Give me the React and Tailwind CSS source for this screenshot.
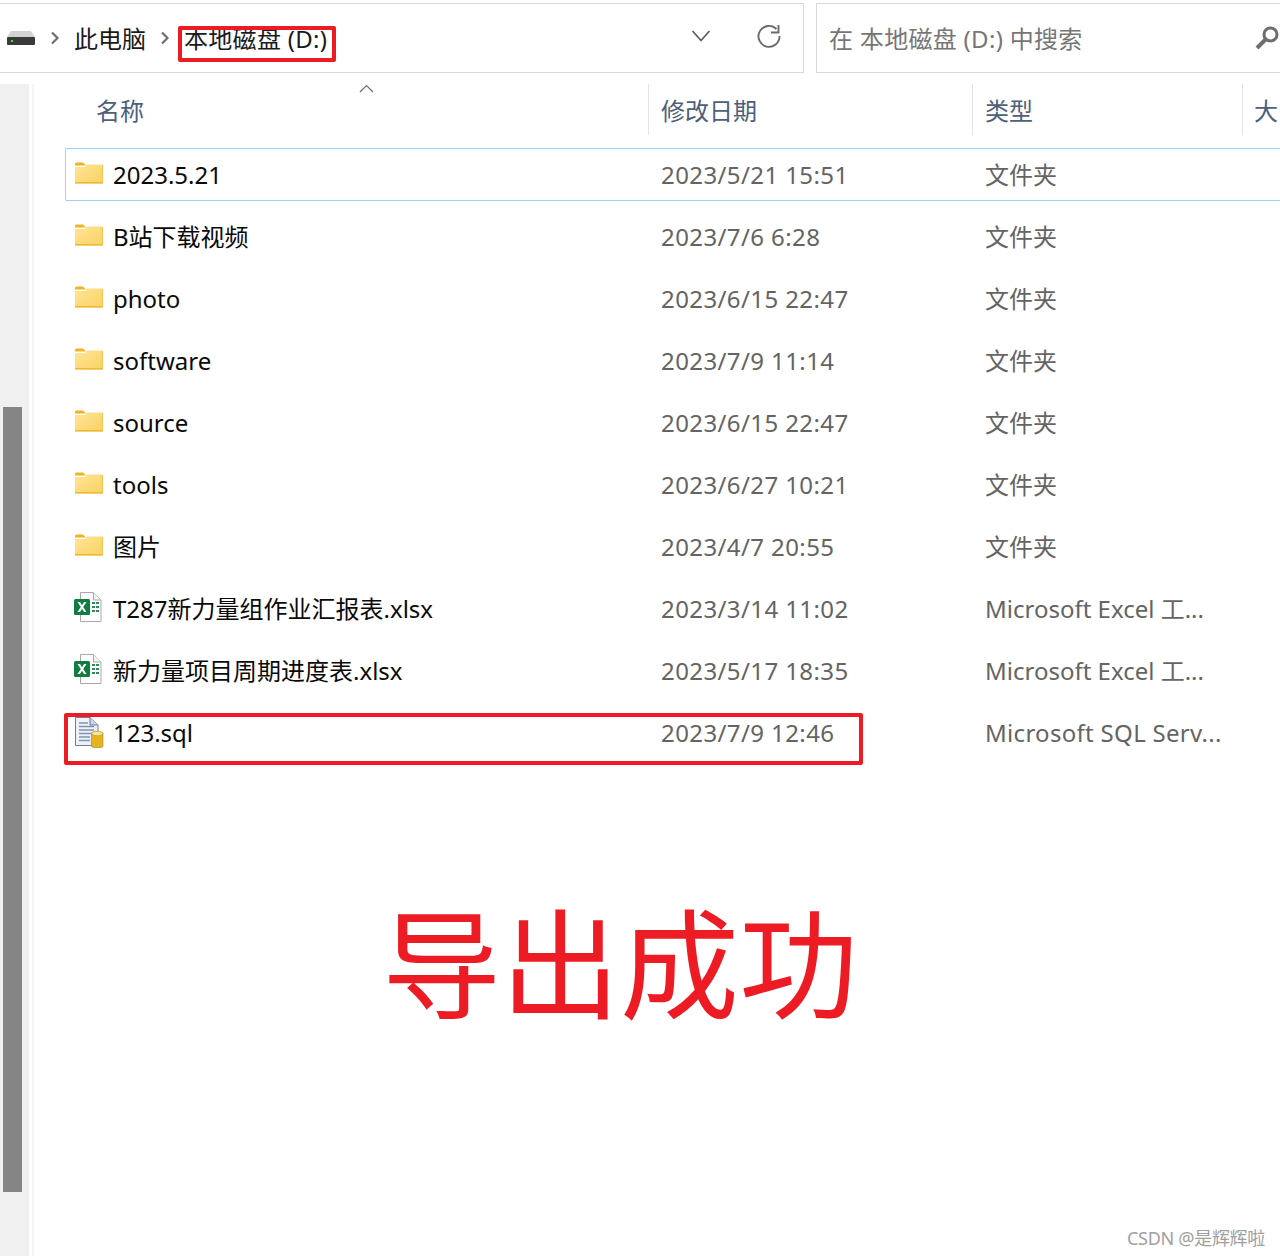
import React from 'react';

const FONT = "font-['Noto_Sans','Noto_Sans_CJK_SC',sans-serif]";

const rows = [
  { name: '2023.5.21', date: '2023/5/21 15:51', type: '文件夹', icon: 'folder', selected: true },
  { name: 'B站下载视频', date: '2023/7/6 6:28', type: '文件夹', icon: 'folder' },
  { name: 'photo', date: '2023/6/15 22:47', type: '文件夹', icon: 'folder' },
  { name: 'software', date: '2023/7/9 11:14', type: '文件夹', icon: 'folder' },
  { name: 'source', date: '2023/6/15 22:47', type: '文件夹', icon: 'folder' },
  { name: 'tools', date: '2023/6/27 10:21', type: '文件夹', icon: 'folder' },
  { name: '图片', date: '2023/4/7 20:55', type: '文件夹', icon: 'folder' },
  { name: 'T287新力量组作业汇报表.xlsx', date: '2023/3/14 11:02', type: 'Microsoft Excel 工...', icon: 'excel' },
  { name: '新力量项目周期进度表.xlsx', date: '2023/5/17 18:35', type: 'Microsoft Excel 工...', icon: 'excel' },
  { name: '123.sql', date: '2023/7/9 12:46', type: 'Microsoft SQL Serv...', icon: 'sql' },
];

const FolderIcon = () => (
  <svg width="28" height="22" viewBox="0 0 28 22" className="block">
    <defs>
      <linearGradient id="folderFill" x1="0" y1="0" x2="1" y2="1">
        <stop offset="0" stopColor="#ffe596" />
        <stop offset="1" stopColor="#fbd263" />
      </linearGradient>
    </defs>
    <path d="M0 2 Q0 .5 1.5 .5 H8 L11 3.5 H0 Z" fill="#f4b21f" />
    <path d="M0 5 L10 5 L12 2.5 H27 Q28 2.5 28 3.5 V20.5 Q28 21.5 27 21.5 H1 Q0 21.5 0 20.5 Z" fill="url(#folderFill)" />
    <rect x="0" y="20" width="28" height="1.5" fill="#f0b733" />
    <rect x="27" y="3" width="1" height="18" fill="#f6c452" />
  </svg>
);

const ExcelIcon = () => (
  <svg width="28" height="30" viewBox="0 0 28 30" className="block -translate-x-[1px]">
    <path d="M6.5 .5 H19.5 L27 8 V29.5 H6.5 Z" fill="#fff" stroke="#a9a9a9" />
    <path d="M19.5 .5 V8 H27" fill="#f1f1f1" stroke="#a9a9a9" />
    <rect x="0" y="7" width="16" height="16" rx="1.5" fill="#107c41" />
    <path d="M3.5 10 L6.8 15 L3.5 20 H6 L8 16.8 L10 20 H12.5 L9.2 15 L12.5 10 H10 L8 13.2 L6 10 Z" fill="#fff" />
    <path d="M18 10 h3v2h-3z M22 10 h3v2h-3z M18 14 h3v2h-3z M22 14 h3v2h-3z M18 18 h3v2h-3z M22 18 h3v2h-3z" fill="#2e8b57" />
  </svg>
);

const SqlIcon = () => (
  <svg width="29" height="31" viewBox="0 0 29 31" className="block translate-y-[2px]">
    <path d="M.5 .5 H15 L23 8 V28.5 H.5 Z" fill="#eef2f8" stroke="#6d7f96" />
    <path d="M15 .5 V8 H23" fill="#c9d6e6" stroke="#6d7f96" />
    <path d="M4 6h9 M4 9.5h15 M4 13h15 M4 16.5h15 M4 20h11 M4 23.5h11" stroke="#7f93b0" strokeWidth="1.4" />
    <rect x="16.5" y="15" width="11.5" height="15.5" rx="2" fill="#e6b422" stroke="#a88414" strokeWidth=".6" />
    <ellipse cx="22.2" cy="16.5" rx="5.7" ry="2.2" fill="#f7e39a" stroke="#b8951f" strokeWidth=".6" />
  </svg>
);

const DriveIcon = () => (
  <svg width="28" height="14" viewBox="0 0 28 14" className="block">
    <path d="M4 0 H24 L28 6 H0 Z" fill="#d2d2d2" />
    <rect x="0" y="6" width="28" height="8" rx="1" fill="#3a3a3a" />
    <rect x="4" y="9" width="2" height="2" fill="#39e639" />
  </svg>
);

const Chevron = () => (
  <svg width="10" height="14" viewBox="0 0 10 14" className="block">
    <path d="M2 1.5 L7.5 7 L2 12.5" fill="none" stroke="#6e6e6e" strokeWidth="2.2" />
  </svg>
);

const icons = { folder: FolderIcon, excel: ExcelIcon, sql: SqlIcon };

const Row = ({ row }) => {
  const Icon = icons[row.icon];
  return (
    <div className={`h-[53px] mb-[9px] ml-[31px] flex items-center border border-r-0 ${row.selected ? 'border-[#99d1f7] rounded-l-[2px]' : 'border-transparent'}`}>
      <div className="w-[47px] pl-[9px] h-full flex items-center shrink-0">
        <div className="-translate-y-[2px]"><Icon /></div>
      </div>
      <div className="w-[548px] shrink-0 text-[24px] text-[#0a0a0a] whitespace-nowrap">{row.name}</div>
      <div className="w-[324px] shrink-0 text-[24px] text-[#646464] whitespace-nowrap tracking-[0.4px]">{row.date}</div>
      <div className={`text-[24px] text-[#646464] whitespace-nowrap ${row.icon === 'sql' ? 'tracking-[0.3px]' : ''}`}>{row.type}</div>
    </div>
  );
};

export default function App() {
  return (
    <div className={`relative w-[1280px] h-[1256px] overflow-hidden bg-white ${FONT}`}>
      {/* 地址栏 */}
      <div className="h-[84px] pt-[3px] flex items-start">
        <div className="w-[804px] h-[70px] border border-l-0 border-[#d9d9d9] flex items-center shrink-0">
          <div className="ml-[7px]"><DriveIcon /></div>
          <div className="ml-[15px]"><Chevron /></div>
          <span className="ml-[14px] text-[24px] text-[#1a1a1a] translate-y-[1px]">此电脑</span>
          <div className="ml-[14px]"><Chevron /></div>
          <span className="ml-[14px] text-[24px] text-[#1a1a1a] whitespace-nowrap translate-y-[1px] tracking-[0.3px]">本地磁盘 (D:)</span>
          <div className="ml-auto -mt-[4px] flex items-center mr-[21px] gap-[45px]">
            <svg width="20" height="14" viewBox="0 0 20 14"><path d="M1.5 2 L10 11.5 L18.5 2" fill="none" stroke="#5f5f5f" strokeWidth="1.8" /></svg>
            <svg width="26" height="26" viewBox="0 0 26 26"><path d="M22.5 2 V9.5 H15 M20.5 6 A10.5 10.5 0 1 0 23.5 13" fill="none" stroke="#6a6a6a" strokeWidth="1.9" /></svg>
          </div>
        </div>
        <div className="ml-[12px] flex-1 h-[70px] border border-r-0 border-[#d9d9d9] flex items-center pl-[12px] relative">
          <span className="text-[24px] text-[#767676] whitespace-nowrap translate-y-[1px] tracking-[0.3px]">在 本地磁盘 (D:) 中搜索</span>
          <svg className="absolute left-[438px] top-[21px]" width="25" height="26" viewBox="0 0 25 26"><circle cx="15.5" cy="9.5" r="6.5" fill="none" stroke="#6f6f6f" strokeWidth="3" /><path d="M10.5 14.5 L2 23" stroke="#6f6f6f" strokeWidth="4" /></svg>
        </div>
      </div>

      <div className="flex h-[1172px]">
        {/* 左侧滚动条 */}
        <div className="w-[29px] bg-[#f0f0f0] shrink-0 pt-[323px] pl-[3px]">
          <div className="w-[19px] h-[785px] bg-[#858585]" />
        </div>
        <div className="w-[5px] shrink-0 border-r-[2px] border-[#f5f5f5]" />

        {/* 文件列表 */}
        <div className="flex-1 min-w-0">
          <div className="h-[64px] flex relative">
            <svg className="absolute left-[325px] top-0" width="15" height="9" viewBox="0 0 15 9"><path d="M1 8 L7.5 1.5 L14 8" fill="none" stroke="#6e6e6e" strokeWidth="1.2" /></svg>
            <div className="w-[614px] h-[51px] shrink-0 pl-[62px] pt-[3px] flex items-center text-[24px] text-[#4c607a]">名称</div>
            <div className="w-[324px] h-[51px] shrink-0 border-l border-[#e5e5e5] pl-[12px] pt-[3px] flex items-center text-[24px] text-[#4c607a]">修改日期</div>
            <div className="w-[270px] h-[51px] shrink-0 border-l border-[#e5e5e5] pl-[12px] pt-[3px] flex items-center text-[24px] text-[#4c607a]">类型</div>
            <div className="flex-1 h-[51px] border-l border-[#e5e5e5] pl-[11px] pt-[3px] flex items-center text-[24px] text-[#4c607a] whitespace-nowrap">大</div>
          </div>
          {rows.map((row) => <Row key={row.name} row={row} />)}
        </div>
      </div>

      {/* 红色标注 */}
      <div className="absolute left-[178px] top-[26px] w-[158px] h-[36px] border-[4px] border-[#ed1c24] rounded-[2px]" />
      <div className="absolute left-[64px] top-[713px] w-[799px] h-[52px] border-[4px] border-[#ed1c24] rounded-[2px]" />
      <div className="absolute left-[382px] top-[873px] text-[119px] leading-[170px] font-normal text-[#ed1c24] whitespace-nowrap font-['Noto_Sans_CJK_SC',sans-serif]">导出成功</div>
      <div className="absolute right-[15px] top-[1225px] text-[18px] text-[#a0a0a0] whitespace-nowrap tracking-[-0.3px]">CSDN @是辉辉啦</div>
    </div>
  );
}
